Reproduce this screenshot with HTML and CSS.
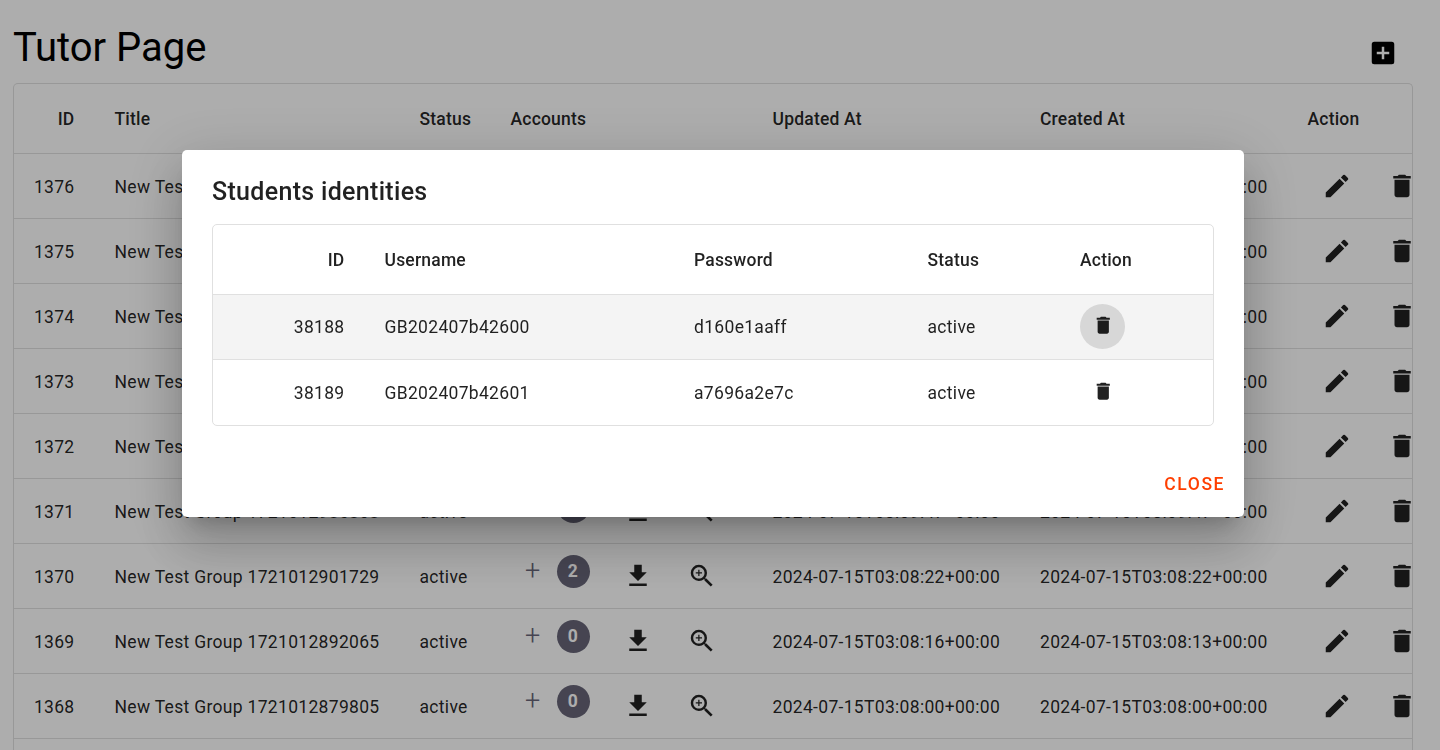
FILE: index.html
```html
<!DOCTYPE html>
<html lang="en">
<head>
<meta charset="utf-8">
<title>Tutor Page</title>
<link rel="stylesheet" href="styles.css">
</head>
<body>
<svg class="defs" width="0" height="0">
  <symbol id="edit" viewBox="0 0 24 24"><path d="M3 17.25V21h3.75L17.81 9.94l-3.75-3.75L3 17.25zM20.71 7.04a.996.996 0 0 0 0-1.41l-2.34-2.34a.996.996 0 0 0-1.41 0l-1.83 1.83 3.75 3.75 1.83-1.83z"/></symbol>
  <symbol id="trash" viewBox="0 0 24 24"><path d="M6 19c0 1.1.9 2 2 2h8c1.1 0 2-.9 2-2V7H6v12zM19 4h-3.5l-1-1h-5l-1 1H5v2h14V4z"/></symbol>
  <symbol id="download" viewBox="0 0 24 24"><path d="M19 9h-4V3H9v6H5l7 7 7-7zM5 18v2h14v-2H5z"/></symbol>
  <symbol id="zoom" viewBox="0 0 24 24"><path d="M15.5 14h-.79l-.28-.27A6.471 6.471 0 0 0 16 9.5 6.5 6.5 0 1 0 9.5 16c1.61 0 3.09-.59 4.23-1.57l.27.28v.79l5 4.99L20.49 19l-4.99-5zm-6 0C7.01 14 5 11.99 5 9.5S7.01 5 9.5 5 14 7.01 14 9.5 11.99 14 9.5 14zM12 10h-2v2H9v-2H7V9h2V7h1v2h2v1z"/></symbol>
  <symbol id="addbox" viewBox="0 0 24 24"><path d="M19 3H5a2 2 0 0 0-2 2v14a2 2 0 0 0 2 2h14a2 2 0 0 0 2-2V5a2 2 0 0 0-2-2zm-2 10h-4v4h-2v-4H7v-2h4V7h2v4h4v2z"/></symbol>
</svg>
<main class="page">
  <header class="page-head">
    <h1 class="page-title">Tutor Page</h1>
    <svg class="icon"><use href="#addbox"/></svg>
  </header>
  <section class="table groups" id="groups">
    <div class="row head"><span class="num">ID</span><span>Title</span><span>Status</span><span>Accounts</span><span>Updated At</span><span>Created At</span><span>Action</span></div>
  </section>
</main>
<div class="scrim">
  <section class="dialog">
    <h2 class="dialog-title">Students identities</h2>
    <div class="table students">
      <div class="row head"><span class="num">ID</span><span>Username</span><span>Password</span><span>Status</span><span>Action</span></div>
      <div class="row hovered"><span class="num">38188</span><span>GB202407b42600</span><span>d160e1aaff</span><span>active</span><span class="cell-btn"><button class="icon-btn active"><svg class="icon small"><use href="#trash"/></svg></button></span></div>
      <div class="row last"><span class="num">38189</span><span>GB202407b42601</span><span>a7696a2e7c</span><span>active</span><span class="cell-btn"><button class="icon-btn"><svg class="icon small"><use href="#trash"/></svg></button></span></div>
    </div>
    <footer class="dialog-actions"><button class="close">CLOSE</button></footer>
  </section>
</div>
<script src="rows.js"></script>
</body>
</html>
```
FILE: styles.css
```css
* { box-sizing: border-box; }
body { margin: 0; height: 750px; overflow: hidden; background: #fff; color: #000; font-family: Roboto, sans-serif; }
.defs { display: block; height: 0; }
.page { padding: 0 27px 0 13px; }
.page-head { display: flex; justify-content: space-between; height: 83px; padding: 24px 15px 0 0; }
.page-title { margin: 0; font-size: 40px; font-weight: 400; line-height: 48px; letter-spacing: 0; }
.page-head .icon { margin-top: 14px; }
.icon { display: block; flex: none; width: 30px; height: 30px; fill: currentColor; }
.icon.small { width: 22.5px; height: 22.5px; }
.table { border: 1px solid #e0e0e0; border-radius: 5px; overflow: hidden; color: rgba(0,0,0,.87); font-size: 17.5px; letter-spacing: .3125px; line-height: 25px; }
.groups { width: 1400px; height: 667px; border-bottom: 0; border-radius: 5px 5px 0 0; }
.row { display: grid; align-items: center; height: 65px; border-bottom: 1px solid #e0e0e0; white-space: nowrap; }
.row > span { padding: 2px 0 0 20px; }
.row > .num { padding: 2px 20px 0 0; text-align: right; }
.row.head { height: 70px; font-weight: 500; letter-spacing: .2px; }
.groups .row { grid-template-columns: 80.5px 305px 91px 262px 267.5px 267.5px 170px; }
.row > .accounts { display: flex; align-items: center; padding: 0 0 0 34.5px; }
.plus { width: 14px; margin-top: -11px; color: #676578; font-size: 27px; font-weight: 300; line-height: 30px; letter-spacing: 0; }
.count { width: 33px; height: 33px; margin: -10px 33.5px 0 17.5px; border-radius: 50%; background: #676578; color: #fff; font-weight: 700; text-align: center; line-height: 33px; }
.accounts .icon + .icon { margin-left: 33.5px; }
.row > .actions { display: flex; padding: 0 0 0 34px; }
.actions .icon + .icon { margin-left: 35px; }
.scrim { position: fixed; inset: 0; display: flex; align-items: flex-start; padding: 150px 0 0 182px; background: rgba(0,0,0,.32); }
.dialog { width: 1062px; height: 367px; padding: 22px 30px 0; border-radius: 5px; background: #fff; box-shadow: 0 13.75px 18.75px -8.75px rgba(0,0,0,.2), 0 30px 47.5px 3.75px rgba(0,0,0,.14), 0 11.25px 57.5px 10px rgba(0,0,0,.12); }
.dialog-title { margin: 0 0 12px; color: rgba(0,0,0,.87); font-size: 25px; font-weight: 500; line-height: 40px; letter-spacing: .3125px; }
.students .row { grid-template-columns: 151.5px 309.5px 233.5px 152.5px 1fr; }
.students .hovered > span { padding-top: 0; }
.row > .cell-btn { padding-top: 0; }
.row.hovered { background: #f4f4f4; }
.row.hovered > .cell-btn { padding-bottom: 2px; }
.row.last { height: 65px; border-bottom: 0; }
.row.last > .cell-btn { padding-bottom: 1px; }
.icon-btn { display: flex; align-items: center; justify-content: center; width: 45px; height: 45px; padding: 0 0 1px .5px; border: 0; border-radius: 50%; background: none; color: rgba(0,0,0,.87); }
.icon-btn.active { background: #d7d7d7; }
.dialog-actions { display: flex; justify-content: flex-end; margin: 36px -11px 0 0; }
.close { padding: 0; border: 0; background: none; color: #ff3e00; font: 500 17.5px/45px Roboto, sans-serif; letter-spacing: 1.5625px; }
```
FILE: rows.js
```
const rows = [
  [1376, '1721012994712', 2, '03:09:57', '03:09:55'],
  [1375, '1721012985120', 2, '03:09:46', '03:09:46'],
  [1374, '1721012976344', 2, '03:09:37', '03:09:37'],
  [1373, '1721012967051', 2, '03:09:28', '03:09:28'],
  [1372, '1721012958237', 2, '03:09:19', '03:09:19'],
  [1371, '1721012986808', 2, '03:09:47', '03:09:47'],
  [1370, '1721012901729', 2, '03:08:22', '03:08:22'],
  [1369, '1721012892065', 0, '03:08:16', '03:08:13'],
  [1368, '1721012879805', 0, '03:08:00', '03:08:00']
];
const icon = name => `<svg class="icon"><use href="#${name}"/></svg>`;
document.getElementById('groups').insertAdjacentHTML('beforeend', rows.map(([id, title, count, updated, created]) => `
  <div class="row"><span class="num">${id}</span><span>New Test Group ${title}</span><span>active</span>
  <span class="accounts"><span class="plus">+</span><span class="count">${count}</span>${icon('download')}${icon('zoom')}</span>
  <span>2024-07-15T${updated}+00:00</span><span>2024-07-15T${created}+00:00</span>
  <span class="actions">${icon('edit')}${icon('trash')}</span></div>`).join(''));
```
